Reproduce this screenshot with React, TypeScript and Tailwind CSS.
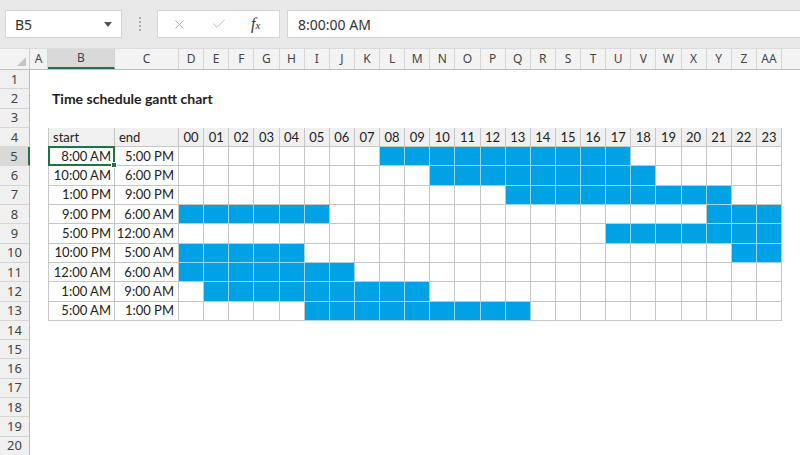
import { X, Check } from "lucide-react";

const GRID =
  "grid grid-rows-1 grid-cols-[30px_18px_67px_64px_repeat(24,25.125px)_1fr]";

const HOUR_LETTERS = "DEFGHIJKLMNOPQRSTUVWXYZ".split("").concat(["AA"]);

const range = (a: number, b: number) =>
  Array.from({ length: b - a + 1 }, (_, i) => a + i);

const schedule = [
  { start: "8:00 AM", end: "5:00 PM", on: range(8, 17) },
  { start: "10:00 AM", end: "6:00 PM", on: range(10, 18) },
  { start: "1:00 PM", end: "9:00 PM", on: range(13, 21) },
  { start: "9:00 PM", end: "6:00 AM", on: [...range(0, 5), ...range(21, 23)] },
  { start: "5:00 PM", end: "12:00 AM", on: range(17, 23) },
  { start: "10:00 PM", end: "5:00 AM", on: [...range(0, 4), ...range(22, 23)] },
  { start: "12:00 AM", end: "6:00 AM", on: range(0, 6) },
  { start: "1:00 AM", end: "9:00 AM", on: range(1, 9) },
  { start: "5:00 AM", end: "1:00 PM", on: range(5, 13) },
];

function FormulaBar() {
  return (
    <div className="h-[48px] bg-[#e9e9e9] flex items-start pt-[10px] font-['Noto_Sans',sans-serif]">
      <div className="ml-[5px] w-[117px] h-[28px] bg-white border border-[#d4d4d4] flex items-center justify-between pl-[9px] pr-[9px]">
        <span className="text-[14px] text-[#333]">B5</span>
        <svg width="8" height="5" viewBox="0 0 8 5">
          <path d="M0 0h8L4 5z" fill="#555" />
        </svg>
      </div>
      <div className="w-[35px] h-[28px] flex flex-col items-center justify-center gap-[2px]">
        <span className="w-[2px] h-[2px] bg-[#aaa]" />
        <span className="w-[2px] h-[2px] bg-[#aaa]" />
        <span className="w-[2px] h-[2px] bg-[#aaa]" />
        <span className="w-[2px] h-[2px] bg-[#aaa]" />
      </div>
      <div className="w-[123px] h-[28px] bg-white border border-[#d4d4d4] flex items-center pl-[14px]">
        <X size={15} strokeWidth={1.5} className="text-[#a8a8a8]" />
        <Check size={16} strokeWidth={1.5} className="ml-[24px] text-[#b8b8b8]" />
        <span className="ml-[24px] text-[16px] italic font-['Liberation_Serif',serif] text-[#333]">
          f<span className="text-[11px]">x</span>
        </span>
      </div>
      <div className="ml-[7px] flex-1 h-[28px] bg-white border border-[#d4d4d4] border-r-0 flex items-center pl-[10px]">
        <span className="text-[14px] text-[#333]">8:00:00 AM</span>
      </div>
    </div>
  );
}

function ColumnHeaders() {
  const letters = ["A", "B", "C", ...HOUR_LETTERS];
  return (
    <div
      className={`${GRID} h-[22px] bg-[#f3f3f3] border-t border-[#dcdcdc] border-b border-b-[#bdbdbd] text-[12px] leading-none text-[#444] font-['Noto_Sans',sans-serif]`}
    >
      <div className="relative border-r border-[#d0d0d0]">
        <svg className="absolute right-[3px] bottom-[3px]" width="9" height="9" viewBox="0 0 9 9">
          <path d="M9 0V9H0z" fill="#c4c4c4" />
        </svg>
      </div>
      {letters.map((l) => (
        <div
          key={l}
          className={`flex items-center justify-center border-r border-[#d6d6d6] ${
            l === "B" ? "bg-[#d9d9d9] border-b-2 border-b-[#217346]" : ""
          }`}
        >
          {l}
        </div>
      ))}
      <div />
    </div>
  );
}

function Row({ n }: { n: number }) {
  const tableRow = n >= 4 && n <= 13;
  const isHead = n === 4;
  const data = n >= 5 && n <= 13 ? schedule[n - 5] : null;
  const cell = "border-r border-b border-[#c6c6c6]";
  const headBg = isHead ? "bg-[#f0f0f0]" : "bg-white";

  return (
    <div className={`${GRID} h-[19.3px] text-[13px] leading-none text-[#222] font-['Lato',sans-serif]`}>
      <div
        className={`flex items-center justify-center text-[13px] text-[#444] border-b border-[#d6d6d6] font-['Noto_Sans',sans-serif] ${
          n === 5
            ? "bg-[#d9d9d9] border-r-2 border-r-[#217346]"
            : "bg-[#f0f0f0] border-r border-r-[#bdbdbd]"
        }`}
      >
        {n}
      </div>
      <div />
      {n === 2 ? (
        <div className="relative flex items-center pl-[4px] font-bold text-[14px] whitespace-nowrap overflow-visible z-10">
          Time schedule gantt chart
        </div>
      ) : tableRow ? (
        <div
          className={`relative flex items-center border-l ${cell} ${headBg} ${
            isHead ? "justify-start pl-[4px]" : "justify-end pr-[3px]"
          }`}
        >
          {isHead ? "start" : data?.start}
          {n === 5 && (
            <div className="absolute z-20 -left-[1px] -top-[1px] -right-[1px] -bottom-[1px] border-2 border-[#217346]">
              <div className="absolute -right-[4px] -bottom-[4px] w-[6px] h-[6px] bg-[#217346] border border-white" />
            </div>
          )}
        </div>
      ) : (
        <div />
      )}
      {tableRow ? (
        <div
          className={`flex items-center ${cell} ${headBg} ${
            isHead ? "justify-start pl-[4px]" : "justify-end pr-[4px]"
          }`}
        >
          {isHead ? "end" : data?.end}
        </div>
      ) : (
        <div />
      )}
      {Array.from({ length: 24 }, (_, h) => {
        if (!tableRow) return <div key={h} />;
        if (isHead)
          return (
            <div key={h} className={`flex items-center justify-center ${cell} ${headBg}`}>
              {String(h).padStart(2, "0")}
            </div>
          );
        const filled = data?.on.includes(h);
        return (
          <div
            key={h}
            className={
              filled
                ? "bg-[#00a2e6] border-r border-b border-[#9fd3ee]"
                : `bg-white ${cell}`
            }
          />
        );
      })}
      <div />
    </div>
  );
}

export default function App() {
  return (
    <div className="w-[800px] h-[455px] overflow-hidden bg-white">
      <FormulaBar />
      <ColumnHeaders />
      <div>
        {Array.from({ length: 20 }, (_, i) => (
          <Row key={i} n={i + 1} />
        ))}
      </div>
    </div>
  );
}
